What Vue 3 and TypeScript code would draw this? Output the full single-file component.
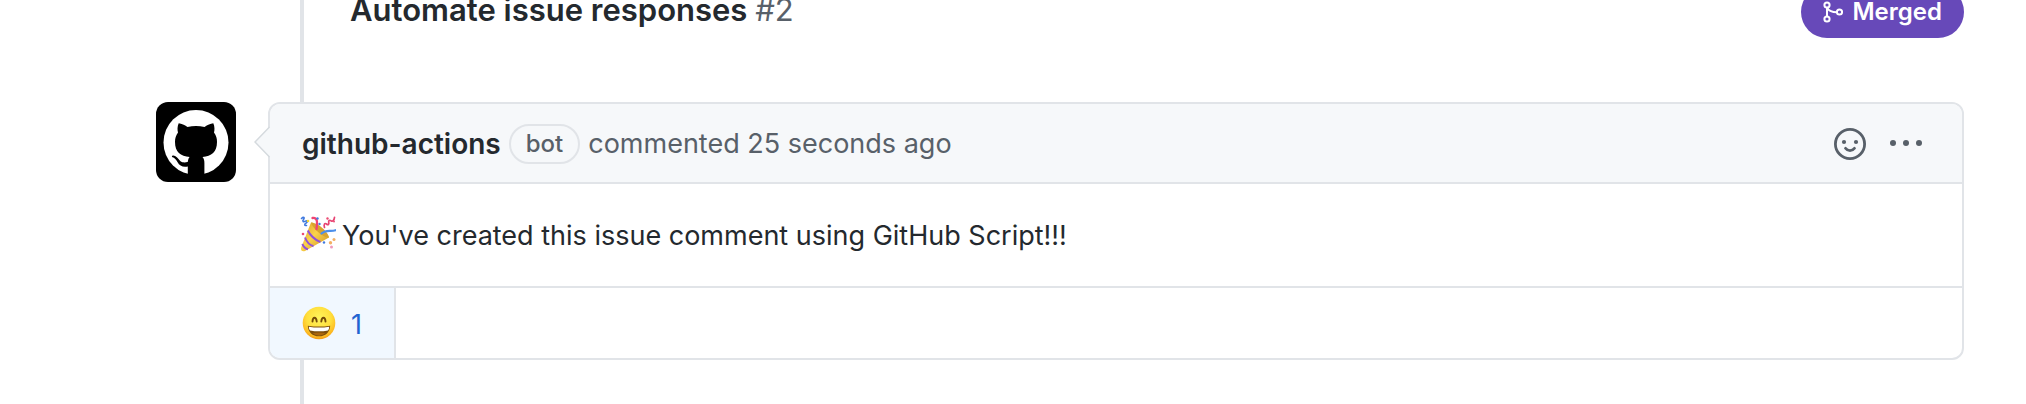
<script setup lang="ts">
interface Comment {
  author: string
  badge: string
  action: string
  body: string
  reactions: number
}

const pull = { title: 'Automate issue responses', number: '#2', state: 'Merged' }

const comment: Comment = {
  author: 'github-actions',
  badge: 'bot',
  action: 'commented 25 seconds ago',
  body: "You've created this issue comment using GitHub Script!!!",
  reactions: 1,
}
</script>

<template>
  <main class="page">
    <section class="timeline">
      <header class="pull">
        <h2 class="pull-title">{{ pull.title }} <span class="number">{{ pull.number }}</span></h2>
        <span class="state">
          <svg class="merge" viewBox="0 0 20 24" aria-hidden="true">
            <g fill="none" stroke="currentColor" stroke-width="2">
              <circle cx="4" cy="5" r="2.6" />
              <circle cx="4" cy="19" r="2.6" />
              <circle cx="16.5" cy="12" r="2.6" />
              <path d="M4 8v8M4.3 8c1.8 3 5 4.2 9.4 4.2" />
            </g>
          </svg>
          {{ pull.state }}
        </span>
      </header>

      <article class="comment">
        <a class="avatar" href="#" aria-label="github-actions">
          <svg viewBox="0 0 80 80" aria-hidden="true">
            <rect width="80" height="80" fill="#000" />
            <circle cx="40" cy="40.5" r="32.5" fill="#fff" />
            <path
              d="M22.7 21.3C25.500 21.500 28.500 23 31.500 25C37 23.700 43 23.700 48.500 25C51.500 23 54.500 21.500 57.300 21.300C58.800 24.800 58.700 28 58 30.500C60.200 33.300 61 36.300 61 40C61 50 55.500 54 46.500 55C48 56.700 48.400 58.500 48.400 61V74H31.800V64.500C27 65.500 23.500 64 21.600 60.300C20.200 57.500 18.700 56 16 55C15.500 53.300 17.500 53 19.500 54.200C22 55.700 22.800 57.700 24.500 59.200C26.500 60.800 29.500 60.600 31.900 59.700C32 57.500 32.600 56 33.700 55C24.500 54 19 50 19 40C19 36.300 19.900 33.300 22 30.500C21.300 28 21.200 24.800 22.700 21.300Z"
              fill="#000"
            />
          </svg>
        </a>

        <div class="card">
          <svg class="caret" viewBox="0 0 16 32" aria-hidden="true">
            <path d="M16 1 1 16l15 15z" fill="#f6f8fa" />
            <path d="M15.500 1 1 16l14.500 15" fill="none" stroke="#d5dade" stroke-width="1.500" />
          </svg>
          <div class="card-header">
            <p class="meta">
              <a class="author" href="#">{{ comment.author }}</a>
              <span class="badge">{{ comment.badge }}</span>
              <span>{{ comment.action }}</span>
            </p>
            <button class="icon-button" type="button" aria-label="Add your reaction">
              <svg class="smiley" viewBox="0 0 32 32" aria-hidden="true">
                <circle cx="16" cy="16" r="14.600" fill="none" stroke="currentColor" stroke-width="2.800" />
                <circle cx="10" cy="14" r="2.100" fill="currentColor" />
                <circle cx="22" cy="14" r="2.100" fill="currentColor" />
                <path d="M11.500 20.300c2.300 3.200 6.700 3.200 9 0" fill="none" stroke="currentColor" stroke-width="2.800" stroke-linecap="round" />
              </svg>
            </button>
            <button class="icon-button" type="button" aria-label="Show options">
              <svg class="kebab" viewBox="0 0 32 32" fill="currentColor" aria-hidden="true">
                <circle cx="3" cy="15" r="3" />
                <circle cx="16" cy="15" r="3" />
                <circle cx="29" cy="15" r="3" />
              </svg>
            </button>
          </div>

          <p class="card-body">
            <svg class="emoji" viewBox="0 0 36 36" role="img" aria-label="Party popper">
              <defs>
                <linearGradient id="cone" x1="0" y1="0" x2="1" y2="1">
                  <stop offset="0" stop-color="#d99a25" />
                  <stop offset=".45" stop-color="#fbd34a" />
                  <stop offset="1" stop-color="#c98a1b" />
                </linearGradient>
              </defs>
              <path d="M11 6.500C17 8 27 16 29 21.500L5 35C2.500 36 .5 34.500 1 32Z" fill="url(#cone)" />
              <path d="M11 6.500C18 6.500 28 16 29 21.500C24 22.500 13 13 11 6.500Z" fill="#d8a42e" />
              <path d="M7.800 14.500C10 19 14.500 23.500 20.500 26.200M5 21.500C6.500 25.500 9.500 29 13.500 30.200M2.300 28C3.500 30.500 5 32.800 8 33.300" fill="none" stroke="#9151d8" stroke-width="2" />
              <path d="M1.500 2.500c2-2 3.500-1 2 1s0 3 2 1.700 2.500.6.500 2-1.500 2.600.5 2.300" fill="none" stroke="#3f79df" stroke-width="1.600" stroke-linecap="round" />
              <path d="M12.500 2c5-.8 5 4 4 11" fill="none" stroke="#f04473" stroke-width="2.300" stroke-linecap="round" />
              <path d="M24.500 11.500c-1-3 .2-5 2-3.500s2.700 0 2.200-1.800 1-2.400 2.500-1.300 3-1 3.300-3.600" fill="none" stroke="#e74473" stroke-width="1.700" stroke-linecap="round" />
              <path d="M21.500 17.500c5-4.500 9-1.500 14-3.300" fill="none" stroke="#4c8fea" stroke-width="2.200" stroke-linecap="round" />
              <g fill="#3f79df"><circle cx="17.500" cy="2.500" r="1.200" /><circle cx="19.500" cy="8" r="1.200" /><circle cx="24" cy="26.500" r="1.200" /></g>
              <g fill="#eb4d75"><circle cx="3" cy="18" r="1.300" /><circle cx="27.500" cy="2.500" r="1.200" /><circle cx="34" cy="5.500" r="1" /></g>
              <g fill="#f3b064"><circle cx="34" cy="23.500" r="1.500" /><circle cx="30.500" cy="26.800" r="1.700" /></g>
              <circle cx="31.500" cy="31" r="1.500" fill="#ef9abd" />
              <circle cx="8" cy="5" r="1.300" fill="#f5d534" />
            </svg>
            <span class="text">{{ comment.body }}</span>
          </p>

          <div class="reactions">
            <button class="reaction" type="button">
              <svg class="emoji" viewBox="0 0 36 36" role="img" aria-label="Laugh">
                <defs>
                  <radialGradient id="face" cx=".5" cy=".35" r=".68">
                    <stop offset="0" stop-color="#fff45c" />
                    <stop offset=".55" stop-color="#ffdf3c" />
                    <stop offset=".85" stop-color="#fdb821" />
                    <stop offset="1" stop-color="#ea8a10" />
                  </radialGradient>
                </defs>
                <circle cx="18" cy="18" r="16.300" fill="url(#face)" />
                <path d="M11.500 16.500c.3-5 3.700-5 4.200 0M20.300 16.500c.5-5 3.900-5 4.200 0" fill="none" stroke="#754b08" stroke-width="1.900" stroke-linecap="round" />
                <path d="M6.800 20.700Q18 22.500 29.200 20.700C29 27 24.500 31.300 18 31.300S7 27 6.800 20.700Z" fill="#7d4e0b" />
                <path d="M7.800 21.700Q18 23.400 28.200 21.700Q28.200 24 27 25.400Q18 27.300 9 25.400Q7.800 24 7.800 21.700Z" fill="#fff" />
                <path d="M11.500 28.300Q18 26.800 24.500 28.300Q18 33 11.500 28.300Z" fill="#a9650c" />
              </svg>
              <span class="text">{{ comment.reactions }}</span>
            </button>
          </div>
        </div>
      </article>
    </section>
  </main>
</template>

<style>
body {
  margin: 0;
  background: #fff;
}
</style>

<style scoped>
.page {
  box-sizing: border-box;
  min-height: 100vh;
  display: flex;
  padding: 0 62px 0 156px;
  color: #24292e;
  font-family: Inter, "Liberation Sans", sans-serif;
  font-size: 27px;
  line-height: 40px;
}

.timeline {
  position: relative;
  flex: 1;
  min-width: 0;
}

.timeline::before {
  content: "";
  position: absolute;
  top: 0;
  bottom: 0;
  left: 144px;
  width: 4px;
  background: #e1e4e8;
}

.pull {
  display: flex;
  align-items: flex-end;
  justify-content: space-between;
  height: 38px;
  padding-left: 194px;
  overflow: hidden;
}

.pull-title {
  margin: 0;
  padding-bottom: 8px;
  font-size: 31px;
  font-weight: 600;
}

.number {
  color: #586069;
  font-weight: 400;
}

.state {
  display: flex;
  align-items: center;
  gap: 9px;
  box-sizing: border-box;
  height: 52px;
  padding: 0 22px;
  border-radius: 26px;
  background: #6749b9;
  color: #fff;
  font-size: 24px;
  font-weight: 600;
}

.merge {
  width: 20px;
  height: 24px;
}

.comment {
  display: flex;
  align-items: flex-start;
  gap: 32px;
  margin-top: 64px;
}

.avatar {
  flex: none;
  display: block;
  width: 80px;
  height: 80px;
  border-radius: 12px;
  overflow: hidden;
}

.avatar svg {
  display: block;
}

.card {
  position: relative;
  flex: 1;
  min-width: 0;
  border: 2px solid #e1e4e8;
  border-radius: 12px;
  background: #fff;
}

.caret {
  position: absolute;
  top: 22px;
  left: -16px;
  width: 16px;
  height: 32px;
}

.card-header {
  display: flex;
  align-items: center;
  gap: 24px;
  padding: 20px 40px 18px 32px;
  border-bottom: 2px solid #e1e4e8;
  border-radius: 10px 10px 0 0;
  background: #f6f8fa;
  color: #586069;
}

.meta {
  flex: 1;
  display: flex;
  align-items: center;
  gap: 8px;
  margin: 0;
}

.author {
  color: #24292e;
  font-size: 28px;
  font-weight: 600;
  text-decoration: none;
}

.badge {
  box-sizing: border-box;
  height: 40px;
  padding: 0 15px;
  border: 2px solid #e1e4e8;
  border-radius: 20px;
  font-size: 24px;
  font-weight: 500;
  line-height: 36px;
}

.icon-button {
  padding: 0;
  border: 0;
  background: none;
  color: #586069;
  cursor: pointer;
}

.icon-button svg {
  display: block;
  width: 32px;
  height: 32px;
}

.card-body {
  display: flex;
  align-items: center;
  gap: 6px;
  margin: 0;
  padding: 28px 30px 30px;
}

.text {
  padding-top: 4px;
}

.emoji {
  flex: none;
  width: 36px;
  height: 36px;
}

.reactions {
  display: flex;
  border-top: 2px solid #e1e4e8;
}

.reaction {
  display: flex;
  align-items: center;
  gap: 14px;
  height: 70px;
  padding: 0 32px 0 31px;
  border: 0;
  border-right: 2px solid #e1e4e8;
  border-radius: 0 0 0 10px;
  background: #f1f8ff;
  color: #2264d1;
  font: inherit;
  cursor: pointer;
}
</style>
